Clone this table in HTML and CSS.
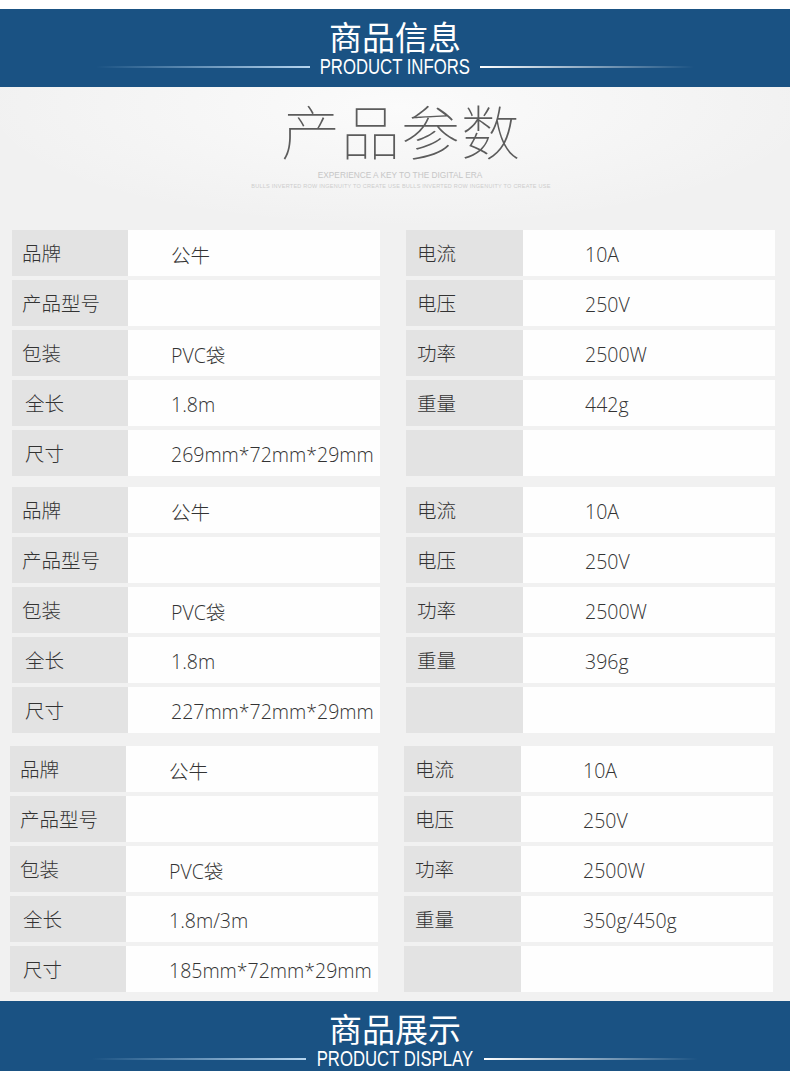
FILE: index.html
```html
<!DOCTYPE html>
<html lang="zh-CN">
<head>
<meta charset="utf-8">
<title>商品信息</title>
<link rel="stylesheet" href="styles.css">
</head>
<body>
<header class="band">
  <h1 class="band-title">商品信息</h1>
  <div class="band-sub"><span class="line line-l"></span><span class="band-en">PRODUCT INFORS</span><span class="line line-r"></span></div>
</header>

<main class="params">
  <div class="params-head">
    <h2 class="params-title">产品参数</h2>
    <p class="tag1">EXPERIENCE A KEY TO THE DIGITAL ERA</p>
    <p class="tag2">BULLS INVERTED ROW INGENUITY TO CREATE USE BULLS INVERTED ROW INGENUITY TO CREATE USE</p>
  </div>

  <div class="specs">
    <section class="spec">
      <div class="row"><div class="pair"><span class="k">品牌</span><span class="v">公牛</span></div><div class="pair pair-r"><span class="k">电流</span><span class="v">10A</span></div></div>
      <div class="row"><div class="pair"><span class="k">产品型号</span><span class="v"></span></div><div class="pair pair-r"><span class="k">电压</span><span class="v">250V</span></div></div>
      <div class="row"><div class="pair"><span class="k">包装</span><span class="v">PVC袋</span></div><div class="pair pair-r"><span class="k">功率</span><span class="v">2500W</span></div></div>
      <div class="row"><div class="pair"><span class="k k-in">全长</span><span class="v">1.8m</span></div><div class="pair pair-r"><span class="k">重量</span><span class="v">442g</span></div></div>
      <div class="row"><div class="pair"><span class="k k-in">尺寸</span><span class="v">269mm*72mm*29mm</span></div><div class="pair pair-r"><span class="k"></span><span class="v"></span></div></div>
    </section>

    <section class="spec">
      <div class="row"><div class="pair"><span class="k">品牌</span><span class="v">公牛</span></div><div class="pair pair-r"><span class="k">电流</span><span class="v">10A</span></div></div>
      <div class="row"><div class="pair"><span class="k">产品型号</span><span class="v"></span></div><div class="pair pair-r"><span class="k">电压</span><span class="v">250V</span></div></div>
      <div class="row"><div class="pair"><span class="k">包装</span><span class="v">PVC袋</span></div><div class="pair pair-r"><span class="k">功率</span><span class="v">2500W</span></div></div>
      <div class="row"><div class="pair"><span class="k k-in">全长</span><span class="v">1.8m</span></div><div class="pair pair-r"><span class="k">重量</span><span class="v">396g</span></div></div>
      <div class="row"><div class="pair"><span class="k k-in">尺寸</span><span class="v">227mm*72mm*29mm</span></div><div class="pair pair-r"><span class="k"></span><span class="v"></span></div></div>
    </section>

    <section class="spec spec-shift">
      <div class="row"><div class="pair"><span class="k">品牌</span><span class="v">公牛</span></div><div class="pair pair-r"><span class="k">电流</span><span class="v">10A</span></div></div>
      <div class="row"><div class="pair"><span class="k">产品型号</span><span class="v"></span></div><div class="pair pair-r"><span class="k">电压</span><span class="v">250V</span></div></div>
      <div class="row"><div class="pair"><span class="k">包装</span><span class="v">PVC袋</span></div><div class="pair pair-r"><span class="k">功率</span><span class="v">2500W</span></div></div>
      <div class="row"><div class="pair"><span class="k k-in">全长</span><span class="v">1.8m/3m</span></div><div class="pair pair-r"><span class="k">重量</span><span class="v">350g/450g</span></div></div>
      <div class="row"><div class="pair"><span class="k k-in">尺寸</span><span class="v">185mm*72mm*29mm</span></div><div class="pair pair-r"><span class="k"></span><span class="v"></span></div></div>
    </section>
  </div>
</main>

<footer class="band band-foot">
  <h2 class="band-title">商品展示</h2>
  <div class="band-sub"><span class="line line-l"></span><span class="band-en">PRODUCT DISPLAY</span><span class="line line-r"></span></div>
</footer>
</body>
</html>
```

FILE: styles.css
```css
html, body {
  margin: 0;
  padding: 0;
}

body {
  width: 790px;
  height: 1071px;
  overflow: hidden;
  background: #ffffff;
  padding-top: 9px;
  box-sizing: border-box;
  font-family: "Noto Sans CJK SC", "Noto Sans", sans-serif;
}

/* ---------- blue bands ---------- */
.band {
  background: #1a5283;
  height: 78px;
  box-sizing: border-box;
  padding-top: 10px;
  color: #ffffff;
  text-align: center;
}

.band-foot {
  height: 70px;
  padding-top: 10px;
  overflow: hidden;
}

.band-title {
  margin: 0;
  font-family: "Noto Sans CJK SC", sans-serif;
  font-weight: 400;
  font-size: 33px;
  line-height: 34px;
}

.band-sub {
  margin-top: 3px;
  display: flex;
  align-items: center;
  justify-content: center;
  gap: 10px;
  height: 22px;
}

.band-en {
  display: inline-block;
  margin: 0 -24px;
  font-family: "Liberation Sans", sans-serif;
  font-size: 22px;
  line-height: 22px;
  color: #ffffff;
  transform: scaleX(0.76);
}

.line {
  width: 214px;
  height: 1.5px;
}

.line-l {
  background: linear-gradient(to right, rgba(160, 200, 235, 0), rgba(190, 220, 245, 0.95));
}

.line-r {
  background: linear-gradient(to left, rgba(160, 200, 235, 0), rgba(255, 255, 255, 1));
}

/* ---------- params ---------- */
.params {
  height: 914px;
  box-sizing: border-box;
  background:
    radial-gradient(ellipse 420px 120px at 400px 20px, #fbfbfb 0%, rgba(251, 251, 251, 0) 100%),
    #f1f1f1;
}

.params-head {
  height: 143px;
  box-sizing: border-box;
  padding-top: 13px;
  text-align: center;
}

.params-title {
  margin: 0;
  padding-left: 12px;
  font-family: "Noto Sans CJK SC", sans-serif;
  font-weight: 100;
  font-size: 59px;
  line-height: 60px;
  letter-spacing: 1px;
  color: #5c5c5c;
}

.tag1 {
  margin: 10px 0 0;
  padding-left: 10px;
  font-family: "Liberation Sans", sans-serif;
  font-size: 8.3px;
  line-height: 10px;
  color: #c6c6c6;
}

.tag2 {
  margin: 2px 0 0;
  padding-left: 12px;
  font-family: "Liberation Sans", sans-serif;
  font-size: 5.5px;
  line-height: 8px;
  letter-spacing: 0.25px;
  color: #cdcdcd;
}

.specs {
  display: flex;
  flex-direction: column;
  gap: 11px;
}

.spec {
  display: flex;
  flex-direction: column;
  gap: 4px;
  padding-left: 12px;
}

.spec-shift {
  margin-top: 2px;
  padding-left: 10px;
}

.row {
  display: flex;
  gap: 26px;
  height: 46px;
}

.pair {
  display: flex;
}

.k,
.v {
  display: flex;
  align-items: center;
  box-sizing: border-box;
  height: 100%;
  color: #333333;
  font-size: 19.5px;
}

.k {
  width: 116px;
  padding-left: 10px;
  padding-bottom: 2px;
  background: #e3e3e3;
  font-family: "Noto Sans CJK SC", sans-serif;
  font-weight: 300;
}

.k-in {
  padding-left: 13px;
}

.v {
  width: 252px;
  padding-left: 43px;
  padding-top: 2px;
  background: #fefefe;
  font-family: "Open Sans", "Noto Sans CJK SC", sans-serif;
  font-weight: 300;
}

.pair-r .k {
  width: 117px;
  padding-left: 11px;
}

.pair-r .v {
  padding-left: 62px;
}
```
